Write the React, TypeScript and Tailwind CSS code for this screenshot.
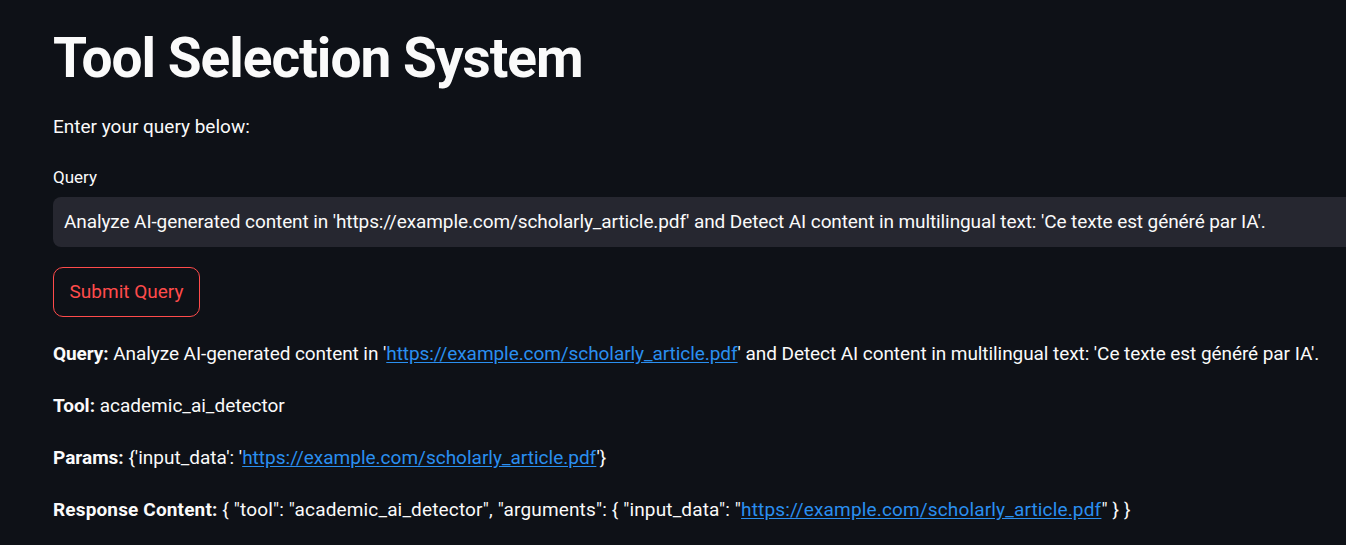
import React from "react";

const font = { fontFamily: "Roboto, 'Noto Sans', sans-serif" };
const URL = "https://example.com/scholarly_article.pdf";

function Link() {
  return <a className="text-[#2a8ff0] underline underline-offset-2">{URL}</a>;
}

export default function App() {
  return (
    <div className="w-[1346px] h-[545px] overflow-hidden bg-[#0e1117] text-[#fafafa]" style={font}>
      <div className="pl-[53px] w-[1500px]">
        <h1 className="text-[55px] font-bold leading-[66px] pt-[25px] m-0 tracking-[-1px]">Tool Selection System</h1>
        <p className="text-[19px] leading-[32px] mt-[20px]">Enter your query below:</p>
        <div className="mt-[24px] text-[17px] leading-[20px]">Query</div>
        <div className="mt-[10px] h-[50px] w-[1400px] rounded-[8px] bg-[#262730] flex items-center pl-[11px] text-[19px] tracking-[-0.1px]">
          Analyze AI-generated content in '{URL}' and Detect AI content in multilingual text: 'Ce texte est généré par IA'.
        </div>
        <button className="mt-[20px] h-[50px] w-[147px] rounded-[10px] border border-[#ff4b4b] text-[#ff4b4b] text-[19px] flex items-center justify-center">
          Submit Query
        </button>
        <div className="mt-[21px] text-[19px] leading-[32px] flex flex-col gap-[20px]">
          <p className="tracking-[-0.07px]"><b>Query:</b> Analyze AI-generated content in '<Link />' and Detect AI content in multilingual text: 'Ce texte est généré par IA'.</p>
          <p><b>Tool:</b> academic_ai_detector</p>
          <p><b>Params:</b> {"{'input_data': '"}<Link />{"'}"}</p>
          <p className="tracking-[0.15px]"><b>Response Content:</b> {'{ "tool": "academic_ai_detector", "arguments": { "input_data": "'}<Link />{'" } }'}</p>
        </div>
      </div>
    </div>
  );
}
